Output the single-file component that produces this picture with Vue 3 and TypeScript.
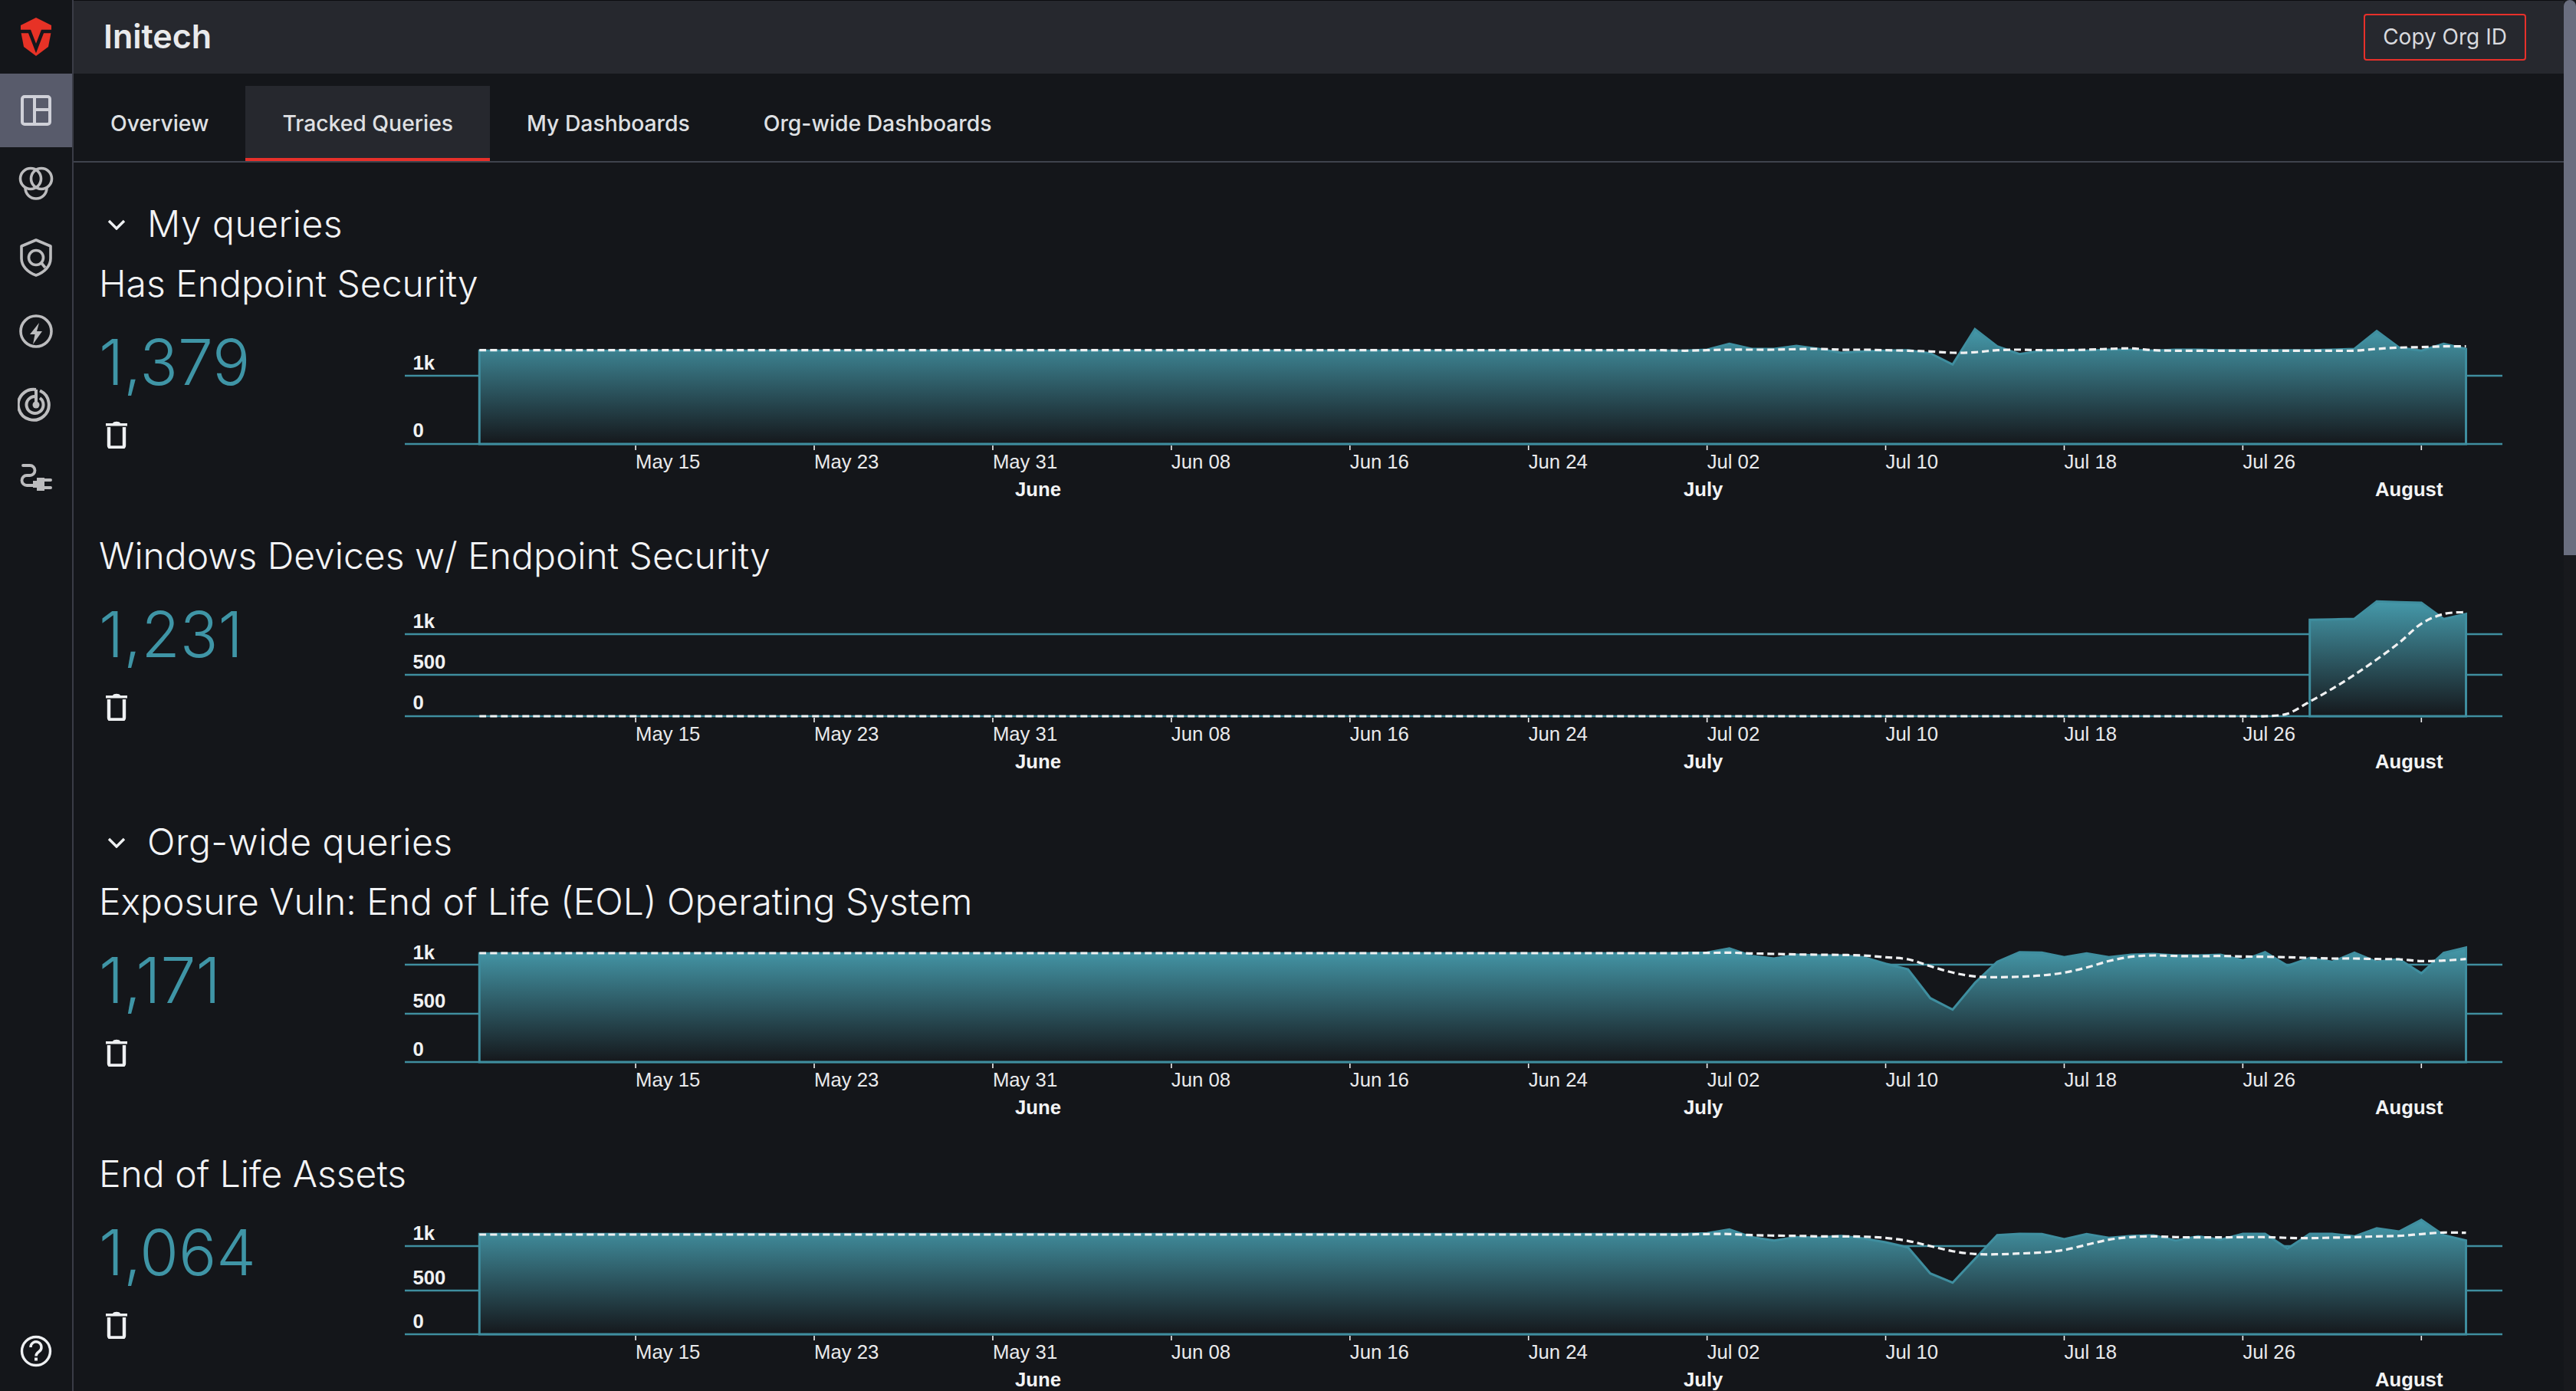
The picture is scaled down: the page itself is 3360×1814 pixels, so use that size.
<script setup lang="ts">
interface ChartDef {
  id: string
  title: string
  value: string
  base: number
  grid: { label: string; y: number; ly: number }[]
  flat: number
  lineFlat: number
  origin: number
  areaStart: number
  area: number[]
  areaFrom: number
  line: number[]
  lineFrom: number
}

const X0 = 625.3
const STEP = 29.115
const BASE_LOCAL = 179
const xOf = (d: number) => X0 + STEP * d

const ticks = [7, 15, 23, 31, 39, 47, 55, 63, 71, 79, 87].map((d) => xOf(d))
const tickLabels = ['May 15', 'May 23', 'May 31', 'Jun 08', 'Jun 16', 'Jun 24', 'Jul 02', 'Jul 10', 'Jul 18', 'Jul 26']
const months = [
  { label: 'June', x: 1324 },
  { label: 'July', x: 2196 },
  { label: 'August', x: 3098 },
]

const defs: ChartDef[] = [
  {
    id: 'a', title: 'Has Endpoint Security', value: '1,379', base: 579,
    grid: [{ label: '1k', y: 490, ly: 482 }, { label: '0', y: 579, ly: 570 }],
    flat: 172, lineFlat: 170, origin: 400, areaStart: 0, areaFrom: 54,
    area: [172, 168, 145, 165, 165, 153, 165, 180, 175, 172, 170, 182, 226, 88, 155, 185, 172, 170, 172, 168, 168, 172, 168, 168, 170, 170, 170, 170, 170, 168, 165, 95, 160, 172, 145, 165],
    lineFrom: 54,
    line: [172, 170, 168, 168, 168, 166, 165, 168, 168, 170, 172, 175, 180, 178, 170, 168, 170, 170, 168, 165, 163, 170, 172, 172, 172, 172, 172, 172, 172, 172, 172, 165, 160, 158, 155, 155],
  },
  {
    id: 'b', title: 'Windows Devices w/ Endpoint Security', value: '1,231', base: 934,
    grid: [{ label: '1k', y: 827, ly: 819 }, { label: '500', y: 880, ly: 872 }, { label: '0', y: 934, ly: 925 }],
    flat: 522, lineFlat: 522, origin: 760, areaStart: 82, areaFrom: 82,
    area: [145, 143, 141, 73, 76, 78, 142, 122],
    lineFrom: 79,
    line: [522, 522, 512, 465, 415, 360, 300, 235, 160, 122, 115],
  },
  {
    id: 'c', title: 'Exposure Vuln: End of Life (EOL) Operating System', value: '1,171', base: 1385,
    grid: [{ label: '1k', y: 1258, ly: 1251 }, { label: '500', y: 1322, ly: 1314 }, { label: '0', y: 1385, ly: 1377 }],
    flat: 70, lineFlat: 69, origin: 1220, areaStart: 0, areaFrom: 54,
    area: [68, 67, 50, 80, 90, 75, 78, 78, 85, 110, 132, 245, 290, 185, 103, 65, 67, 85, 70, 85, 75, 72, 78, 78, 75, 97, 65, 118, 88, 103, 67, 103, 92, 148, 68, 47],
    lineFrom: 54,
    line: [69, 68, 67, 70, 72, 74, 75, 76, 78, 85, 93, 120, 145, 160, 163, 161, 156, 145, 125, 100, 83, 78, 80, 81, 80, 82, 83, 85, 88, 90, 90, 92, 93, 100, 98, 92],
  },
  {
    id: 'd', title: 'End of Life Assets', value: '1,064', base: 1740,
    grid: [{ label: '1k', y: 1625, ly: 1617 }, { label: '500', y: 1683, ly: 1675 }, { label: '0', y: 1740, ly: 1732 }],
    flat: 118, lineFlat: 120, origin: 1570, areaStart: 0, areaFrom: 54,
    area: [118, 115, 100, 130, 143, 130, 132, 125, 135, 150, 170, 272, 308, 215, 122, 117, 118, 138, 118, 133, 125, 123, 143, 127, 140, 117, 117, 175, 117, 117, 127, 95, 108, 62, 122, 143],
    lineFrom: 54,
    line: [120, 118, 118, 122, 124, 125, 127, 127, 128, 133, 145, 165, 185, 196, 197, 194, 190, 180, 160, 140, 130, 127, 130, 131, 131, 130, 130, 133, 134, 132, 130, 127, 125, 118, 112, 113],
  },
]

function smooth(pts: [number, number][]): string {
  let d = `M${pts[0][0].toFixed(1)} ${pts[0][1].toFixed(1)}`
  for (let i = 0; i < pts.length - 1; i++) {
    const p0 = pts[Math.max(0, i - 1)]
    const p1 = pts[i]
    const p2 = pts[i + 1]
    const p3 = pts[Math.min(pts.length - 1, i + 2)]
    const c1x = p1[0] + (p2[0] - p0[0]) / 6
    const c1y = p1[1] + (p2[1] - p0[1]) / 6
    const c2x = p2[0] - (p3[0] - p1[0]) / 6
    const c2y = p2[1] - (p3[1] - p1[1]) / 6
    d += `C${c1x.toFixed(1)} ${c1y.toFixed(1)} ${c2x.toFixed(1)} ${c2y.toFixed(1)} ${p2[0].toFixed(1)} ${p2[1].toFixed(1)}`
  }
  return d
}

const charts = defs.map((c) => {
  const toLocal = (abs: number) => BASE_LOCAL + abs - c.base
  const fromZ = (z: number) => toLocal(c.origin + z / 3)
  const areaPts: string[] = []
  for (let d = c.areaStart; d <= 89; d++) {
    const z = d < c.areaFrom ? c.flat : c.area[d - c.areaFrom]
    areaPts.push(`L${xOf(d).toFixed(1)} ${fromZ(z).toFixed(1)}`)
  }
  const linePts: [number, number][] = []
  for (let d = 0; d <= 89; d++) {
    const z = d < c.lineFrom ? c.lineFlat : c.line[d - c.lineFrom]
    linePts.push([xOf(d), fromZ(z)])
  }
  return {
    id: c.id,
    title: c.title,
    value: c.value,
    grid: c.grid.map((g) => ({ label: g.label, y: toLocal(g.y), ly: toLocal(g.ly) })),
    area: `M${xOf(c.areaStart).toFixed(1)} ${BASE_LOCAL}${areaPts.join('')}L${xOf(89).toFixed(1)} ${BASE_LOCAL}Z`,
    line: smooth(linePts),
  }
})

const mine = charts.slice(0, 2)
const org = charts.slice(2)
const groups = [
  { name: 'My queries', items: mine },
  { name: 'Org-wide queries', items: org },
]
const tabs = ['Overview', 'Tracked Queries', 'My Dashboards', 'Org-wide Dashboards']
</script>

<template>
  <div class="app">
    <aside class="side">
      <div class="logo">
        <svg width="40" height="50" viewBox="0 0 40 50">
          <path d="M20 0 40 10 40 17 36 38 20 50 4 38 0 17 0 10Z" fill="#e73226" />
          <path d="M0 18H11.5L20 40 28.5 18H40" fill="none" stroke="#15171c" stroke-width="4.5" />
        </svg>
      </div>
      <div class="nav active">
        <svg width="44" height="44" viewBox="0 0 44 44" fill="none" stroke="#cfd0d8" stroke-width="4">
          <rect x="4" y="4" width="36" height="36" rx="3" />
          <path d="M20 4V40M20 21H40" />
        </svg>
      </div>
      <div class="nav">
        <svg width="48" height="48" viewBox="0 0 48 48" fill="none" stroke="#bcbcbe" stroke-width="3.6">
          <circle cx="17" cy="17" r="13.5" />
          <circle cx="31" cy="17" r="13.5" />
          <path d="M10 29A14 14 0 0 0 38 29" />
        </svg>
      </div>
      <div class="nav">
        <svg width="44" height="50" viewBox="0 0 44 50" fill="none" stroke="#bcbcbe" stroke-width="3.6">
          <path d="M22 2 41 10V26C41 36 33 44 22 48 11 44 3 36 3 26V10Z" stroke-linejoin="round" />
          <circle cx="22" cy="25" r="9.5" />
          <path d="M29 32 34 38" />
        </svg>
      </div>
      <div class="nav">
        <svg width="48" height="48" viewBox="0 0 48 48">
          <circle cx="24" cy="24" r="20" fill="none" stroke="#bcbcbe" stroke-width="3.6" />
          <path d="M28 13 16 28H22.5L20 41 32 24H25Z" fill="#bcbcbe" />
        </svg>
      </div>
      <div class="nav">
        <svg width="48" height="48" viewBox="0 0 48 48" fill="none" stroke="#bcbcbe" stroke-width="4">
          <path d="M29 5.500A20 20 0 1 1 24 4" />
          <path d="M29 15A11 11 0 1 1 24 13" />
          <path d="M24 4V24" stroke-width="4" />
          <circle cx="24" cy="24" r="4.500" fill="#bcbcbe" stroke="none" />
        </svg>
      </div>
      <div class="nav">
        <svg width="44" height="40" viewBox="0 0 44 40">
          <path d="M5 3H14A6.500 6.500 0 0 1 14 16H10A6.500 6.500 0 0 0 10 29H18" fill="none" stroke="#bcbcbe" stroke-width="3.8" stroke-linecap="round" />
          <path d="M18 23H23V19H33V36H23V32H18Z" fill="#bcbcbe" />
          <path d="M33 22H41M33 32H41" stroke="#bcbcbe" stroke-width="4" stroke-linecap="round" />
        </svg>
      </div>
      <div class="help">
        <svg width="44" height="44" viewBox="0 0 44 44">
          <circle cx="22" cy="22" r="18.500" fill="none" stroke="#eef0f2" stroke-width="3.400" />
          <path d="M15 17A7 7 0 1 1 26 22.500C23 24.500 22 25.500 22 28.500" fill="none" stroke="#eef0f2" stroke-width="3.400" />
          <rect x="20" y="30.500" width="4" height="4" fill="#eef0f2" />
        </svg>
      </div>
    </aside>

    <main class="main">
      <header class="top">
        <h1 class="org">Initech</h1>
        <button class="copy" type="button">Copy Org ID</button>
      </header>
      <nav class="tabs">
        <div v-for="(t, i) in tabs" :key="t" class="tab" :class="{ on: i === 1 }">{{ t }}</div>
      </nav>
      <div class="content">
        <section v-for="g in groups" :key="g.name" class="group">
          <div class="heading">
            <svg class="chev" width="24" height="14" viewBox="0 0 24 14" fill="none" stroke="#eef0f2" stroke-width="3.400">
              <path d="M2 2 12 12 22 2" />
            </svg>
            <h2>{{ g.name }}</h2>
          </div>
          <article v-for="c in g.items" :key="c.id" class="row">
            <h3 class="title">{{ c.title }}</h3>
            <div class="body">
              <div class="stat">
                <div class="num">{{ c.value }}</div>
                <svg class="trash" width="28" height="36" viewBox="0 0 28 36">
                  <path d="M0 3H9C10 0 18 0 19 3H28V6.500H0Z" fill="#eef0f2" />
                  <path d="M4 8V32C4 33.500 5 34.500 6.500 34.500H21.500C23 34.500 24 33.500 24 32V8" fill="none" stroke="#eef0f2" stroke-width="4.4" />
                </svg>
              </div>
              <svg class="chart" width="2740" height="295" viewBox="525 0 2740 295">
                <defs>
                  <linearGradient :id="'g' + c.id" x1="0" y1="0" x2="0" y2="1">
                    <stop offset="0" stop-color="#4599aa" />
                    <stop offset="1" stop-color="#15181c" />
                  </linearGradient>
                </defs>
                <g v-for="g2 in c.grid" :key="g2.label">
                  <line x1="528" x2="3264" :y1="g2.y" :y2="g2.y" class="gridline" />
                  <text x="538.5" :y="g2.ly" class="ylab">{{ g2.label }}</text>
                </g>
                <path :d="c.area" :fill="'url(#g' + c.id + ')'" class="area" />
                <path :d="c.line" class="trend" />
                <line v-for="t in ticks" :key="t" :x1="t" :x2="t" y1="181" y2="187" class="tick" />
                <text v-for="(l, i) in tickLabels" :key="l" :x="ticks[i]" y="211" class="xlab">{{ l }}</text>
                <text v-for="m in months" :key="m.label" :x="m.x" y="247" class="month">{{ m.label }}</text>
              </svg>
            </div>
          </article>
        </section>
      </div>
    </main>

    <div class="scroll"><div class="thumb"></div></div>
  </div>
</template>

<style>
html, body { margin: 0; background: #14161a; overflow: hidden; }
</style>

<style scoped>
.app {
  display: flex;
  width: 3360px;
  height: 1814px;
  overflow: hidden;
  background: #14161a;
  color: #eef0f2;
  font-family: Inter, "Liberation Sans", sans-serif;
}
.side {
  flex: none;
  width: 94px;
  height: 1814px;
  display: flex;
  flex-direction: column;
  background: #14161a;
  border-right: 2px solid #3a3c46;
}
.logo { height: 96px; display: flex; align-items: center; justify-content: center; }
.nav { height: 96px; display: flex; align-items: center; justify-content: center; }
.nav.active { background: #585b6b; }
.help { margin-top: auto; height: 74px; display: flex; justify-content: center; }
.main { flex: none; width: 3248px; display: flex; flex-direction: column; min-width: 0; }
.top {
  flex: none;
  height: 96px;
  padding: 0 49px 0 39px;
  display: flex;
  align-items: center;
  justify-content: space-between;
  background: #26282e;
  border-top: 1px solid #0c0d10;
  box-sizing: border-box;
}
.org { margin: 0 0 4px; font-size: 43px; font-weight: 600; color: #e9eaec; }
.copy {
  width: 212px;
  height: 61px;
  padding: 0 0 2px;
  background: transparent;
  border: 2px solid #e7302a;
  border-radius: 4px;
  color: #d9dade;
  font: 400 28px Inter, sans-serif;
}
.tabs {
  flex: none;
  height: 114px;
  display: flex;
  align-items: flex-end;
  border-bottom: 2px solid #3f434d;
}
.tab {
  box-sizing: content-box;
  height: 90px;
  padding: 4px 48px 0;
  display: flex;
  align-items: center;
  font-size: 28.3px;
  font-weight: 500;
  color: #dfe0e3;
  border-bottom: 4px solid transparent;
  margin-top: auto;
}
.tab.on { background: #26282e; border-bottom-color: #e7302a; }
.content { padding: 56px 0 0 33px; }
.group + .group { margin-top: 24px; }
.heading { display: flex; align-items: center; height: 50px; margin-bottom: 22px; }
.chev { margin-left: 11px; }
.heading h2 { margin: 0 0 3px 28px; font-size: 48px; font-weight: 300; letter-spacing: 0.5px; color: #f2f3f5; }
.row { height: 355px; }
.title { margin: 0; height: 60px; line-height: 60px; font-size: 48px; font-weight: 300; color: #f2f3f5; white-space: nowrap; }
.body { display: flex; }
.stat { flex: none; width: 396px; display: flex; flex-direction: column; align-items: flex-start; }
.num { margin-top: 28px; height: 90px; line-height: 90px; font-size: 82px; font-weight: 300; color: #3f95a6; }
.trash { margin: 31px 0 0 9px; }
.chart { flex: none; }
.gridline { stroke: #3f8e9f; stroke-width: 2.4; }
.area { stroke: #3f8e9f; stroke-width: 3; }
.trend { fill: none; stroke: #f0f1f2; stroke-width: 3.2; stroke-dasharray: 9 5; }
.tick { stroke: #f0f0f0; stroke-width: 1.6; }
.ylab { font-family: "Liberation Sans", Arial, sans-serif; font-size: 25.7px; font-weight: 700; fill: #f0f1f2; }
.xlab { font-family: "Liberation Sans", Arial, sans-serif; font-size: 25.7px; fill: #e9eaec; }
.month { font-family: "Liberation Sans", Arial, sans-serif; font-size: 25.7px; font-weight: 700; fill: #f2f3f4; }
.scroll { flex: none; width: 16px; height: 1814px; background: #18191d; }
.thumb { height: 724px; background: #6a6e7f; border-radius: 8px 8px 0 0; }
</style>
